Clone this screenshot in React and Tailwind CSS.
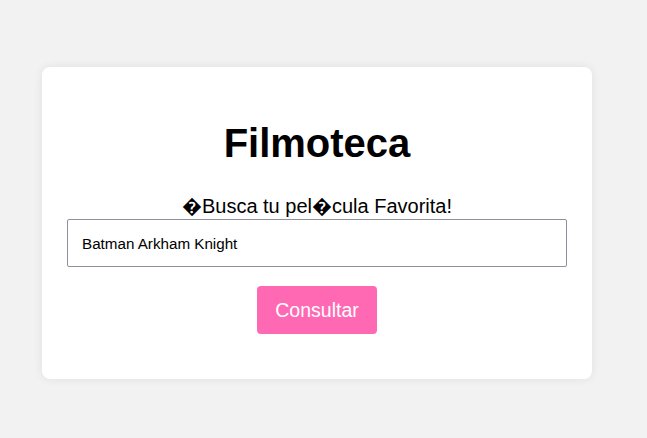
import React from 'react';

const App = () => {
    return (
        <div className="min-h-[438px] w-full bg-[#f2f2f2] pt-[67px] pl-[42px]" style={{ fontFamily: '"Liberation Sans", Arial, sans-serif' }}>
            {/* Card */}
            <div className="w-[550px] h-[312px] bg-white rounded-lg shadow-[0_0_10px_rgba(0,0,0,0.08)] px-[25px] pt-[53px] flex flex-col items-center">
                <h1 className="text-[40px] leading-[46px] font-bold text-black">Filmoteca</h1>

                <label className="mt-[29px] text-[20px] leading-[23px] text-black">
                    {'\uFFFD'}Busca tu pel{'\uFFFD'}cula Favorita!
                </label>
                <input
                    type="text"
                    defaultValue="Batman Arkham Knight"
                    className="mt-[1px] w-[500px] h-[48px] border border-[#8f8f9d] rounded-[2px] px-[14px] text-[15.2px] text-black outline-none"
                />

                <button className="mt-[19px] w-[120px] h-[48px] rounded-[4px] bg-[#ff69b4] text-white text-[19.5px] pt-[2px]">
                    Consultar
                </button>
            </div>
        </div>
    );
};

export default App;
